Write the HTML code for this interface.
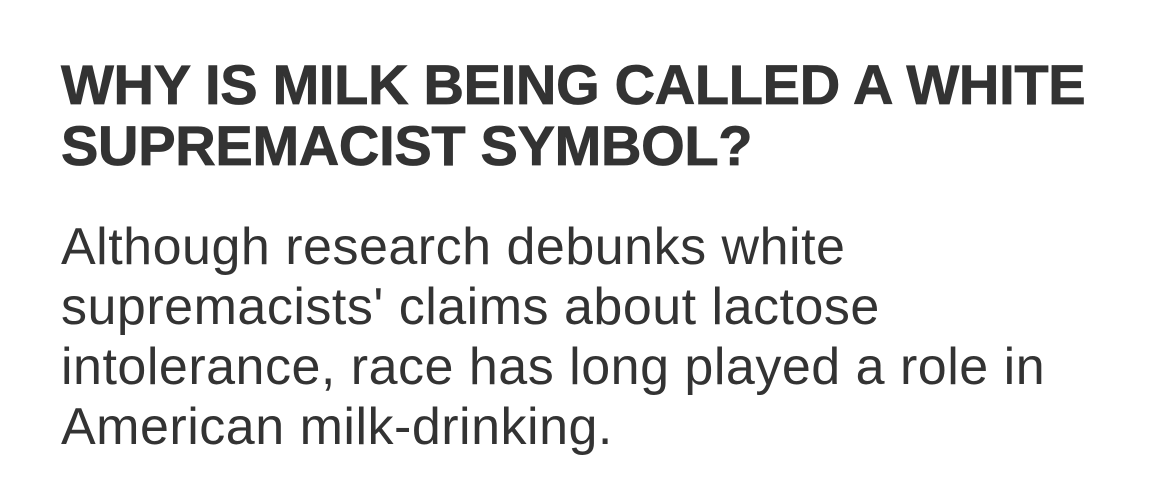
<!DOCTYPE html>
<html><head><meta charset="utf-8"><style>
html,body{margin:0;padding:0;background:#fff;width:1170px;height:500px;overflow:hidden}
.h{position:absolute;left:61px;top:54px;font-family:"Liberation Sans",sans-serif;font-weight:bold;font-size:56px;line-height:61px;color:#333;white-space:nowrap;letter-spacing:-0.3px;-webkit-text-stroke:0.8px #333}
.b{position:absolute;left:61px;top:217px;font-family:"Liberation Sans",sans-serif;font-size:52px;line-height:60px;color:#333;white-space:nowrap;letter-spacing:0.5px}
.h div,.b div{display:block}
</style></head><body>
<div class="h"><div>WHY IS MILK BEING CALLED A WHITE</div><div>SUPREMACIST SYMBOL?</div></div>
<div class="b"><div>Although research debunks white</div><div>supremacists' claims about lactose</div><div>intolerance, race has long played a role in</div><div>American milk-drinking.</div></div>
</body></html>
